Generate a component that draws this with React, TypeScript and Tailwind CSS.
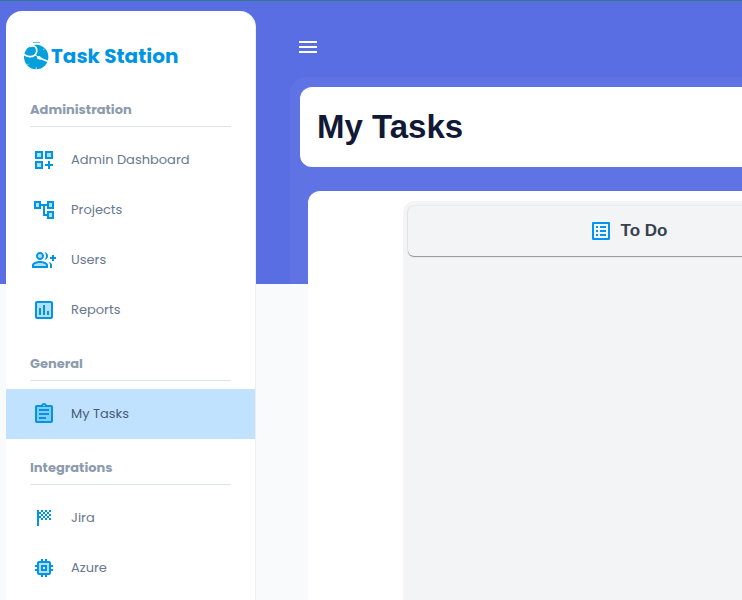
import type { ReactNode } from "react";

type IconProps = { tint?: ReactNode; d: string; className?: string };

function Icon({ tint, d, className = "text-[#0095e2]" }: IconProps) {
  return (
    <svg viewBox="0 0 24 24" className={`h-6 w-6 shrink-0 fill-current ${className}`} aria-hidden="true">
      {tint && <g opacity="0.3">{tint}</g>}
      <path d={d} />
    </svg>
  );
}

const icons = {
  dashboard: (
    <Icon
      tint={<path d="M5 5h4v4H5zM15 5h4v4h-4zM5 15h4v4H5z" />}
      d="M3 11h8V3H3v8zm2-6h4v4H5V5zM13 3v8h8V3h-8zm6 6h-4V5h4v4zM3 21h8v-8H3v8zm2-6h4v4H5v-4zM18 13h-2v3h-3v2h3v3h2v-3h3v-2h-3z"
    />
  ),
  projects: (
    <Icon
      tint={<path d="M4 5h3v4H4zM17 5h3v4h-3zM17 15h3v4h-3z" />}
      d="M22 11V3h-7v3H9V3H2v8h7V8h2v10h4v3h7v-8h-7v3h-2V8h2v3h7zM7 9H4V5h3v4zm10 6h3v4h-3v-4zm0-10h3v4h-3V5z"
    />
  ),
  users: (
    <Icon
      tint={
        <>
          <circle cx="8" cy="8" r="2" />
          <path d="M8 15c-2.7 0-5.8 1.29-6 2.01V18h12v-1c-.2-.71-3.3-2-6-2z" />
        </>
      }
      d="M22 9V7h-2v2h-2v2h2v2h2v-2h2V9zM8 12c2.21 0 4-1.79 4-4s-1.79-4-4-4-4 1.79-4 4 1.79 4 4 4zm0-6c1.1 0 2 .9 2 2s-.9 2-2 2-2-.9-2-2 .9-2 2-2zM8 13c-2.67 0-8 1.34-8 4v3h16v-3c0-2.66-5.33-4-8-4zm6 5H2v-.99C2.2 16.29 5.3 15 8 15s5.8 1.29 6 2v1zM12.51 4.05C13.43 5.11 14 6.49 14 8s-.57 2.89-1.49 3.95C14.47 11.7 16 10.04 16 8s-1.53-3.7-3.49-3.95zM16.53 13.83C17.42 14.66 18 15.7 18 17v3h2v-3c0-1.45-1.59-2.51-3.47-3.17z"
    />
  ),
  reports: (
    <Icon
      tint={<path d="M5 5h14v14H5z" />}
      d="M19 3H5c-1.1 0-2 .9-2 2v14c0 1.1.9 2 2 2h14c1.1 0 2-.9 2-2V5c0-1.1-.9-2-2-2zm0 16H5V5h14v14zM7 10h2v7H7zM11 7h2v10h-2zM15 13h2v4h-2z"
    />
  ),
  tasks: (
    <Icon
      tint={<path d="M5 5h14v14H5z" />}
      d="M7 15h7v2H7zm0-4h10v2H7zm0-4h10v2H7zm12-4h-4.18C14.4 1.84 13.3 1 12 1c-1.3 0-2.4.84-2.82 2H5c-.14 0-.27.01-.4.04-.39.08-.74.28-1.01.55-.18.18-.33.4-.43.64-.1.23-.16.49-.16.77v14c0 .27.06.54.16.78s.25.45.43.64c.27.27.62.47 1.01.55.13.02.26.03.4.03h14c1.1 0 2-.9 2-2V5c0-1.1-.9-2-2-2zm-7-.25c.41 0 .75.34.75.75s-.34.75-.75.75-.75-.34-.75-.75.34-.75.75-.75zM19 19H5V5h14v14z"
    />
  ),
  jira: (
    <Icon d="M11 6H9V4h2V6zM15 4h-2v2h2V4zM9 14h2v-2H9V14zM19 10V8h-2v2H19zM19 14v-2h-2v2H19zM13 14h2v-2h-2V14zM19 4h-2v2h2V4zM13 8V6h-2v2H13zM7 10V8h2V6H7V4H5v16h2v-8h2v-2H7zM15 12h2v-2h-2V12zM11 10v2h2v-2H11zM9 8v2h2V8H9zM13 10h2V8h-2V10zM15 6v2h2V6H15z" />
  ),
  azure: (
    <Icon
      tint={<path d="M7 17h10V7H7v10zm2-8h6v6H9V9z" />}
      d="M15 9H9v6h6V9zm-2 4h-2v-2h2v2zm8-2V9h-2V7c0-1.1-.9-2-2-2h-2V3h-2v2h-2V3H9v2H7c-1.1 0-2 .9-2 2v2H3v2h2v2H3v2h2v2c0 1.1.9 2 2 2h2v2h2v-2h2v2h2v-2h2c1.1 0 2-.9 2-2v-2h2v-2h-2v-2h2zm-4 6H7V7h10v10z"
    />
  ),
};

const sections = [
  {
    title: "Administration",
    items: [
      { label: "Admin Dashboard", icon: icons.dashboard },
      { label: "Projects", icon: icons.projects },
      { label: "Users", icon: icons.users },
      { label: "Reports", icon: icons.reports },
    ],
  },
  { title: "General", items: [{ label: "My Tasks", icon: icons.tasks, active: true }] },
  {
    title: "Integrations",
    items: [
      { label: "Jira", icon: icons.jira },
      { label: "Azure", icon: icons.azure },
    ],
  },
] as { title: string; items: { label: string; icon: ReactNode; active?: boolean }[] }[];

function Logo() {
  return (
    <svg viewBox="0 0 25 28" className="h-7 w-[25px] shrink-0" aria-hidden="true">
      <path d="M9 .5h7" stroke="#5fc3e6" strokeWidth="1" />
      <circle cx="12.2" cy="15" r="12.2" fill="#059fdb" />
      <g fill="none" stroke="#fff" strokeLinecap="round">
        <path d="M0 12.500c3 2.300 7.500 3 10.500.8 2.600-2 3-6 1-8.300-1.300-1.400-3.500-1.200-5.300-.6" strokeWidth="1.700" />
        <path d="M11 12.800l3.500 2.500" strokeWidth="1" />
        <path d="M14.500 15.500l1.500.6" strokeWidth="3" />
        <path d="M16 16.200l8.200 3.400" strokeWidth="1.600" />
        <path d="M12.200 25.800v.6M4 22.500l.4-.4M20.300 7l-.4.400" strokeWidth="1" />
      </g>
    </svg>
  );
}

function Sidebar() {
  return (
    <aside className="mt-[10px] ml-[6px] w-[250px] shrink-0 overflow-hidden rounded-t-2xl border-r border-[#eceef1] bg-white font-['Poppins','Inter',sans-serif]">
      <a href="#home" className="flex h-[70px] items-center gap-[2px] pt-5 pl-[18px] text-xl font-bold text-[#0095e2]">
        <Logo />
        Task Station
      </a>
      <nav>
        {sections.map((section) => (
          <section key={section.title}>
            <h2 className="mx-6 mb-2 border-b border-[#dee5eb] pt-[19px] pb-[6px] text-[13px] leading-5 font-bold text-[#8c9bad]">
              {section.title}
            </h2>
            {section.items.map((item) => (
              <a
                key={item.label}
                href={`#${item.label}`}
                aria-current={item.active ? "page" : undefined}
                className={`flex h-[50px] items-center gap-[15px] px-[26px] text-[13px] leading-5 ${
                  item.active ? "bg-[#c1e2fe] text-[#475b78]" : "text-[#67788e]"
                }`}
              >
                {item.icon}
                {item.label}
              </a>
            ))}
          </section>
        ))}
      </nav>
    </aside>
  );
}

export default function App() {
  return (
    <div className="flex h-screen overflow-hidden border-t border-[#33798e] bg-[linear-gradient(#5a6ee4_283px,#f8fafc_283px)] font-['Liberation_Sans',Arial,sans-serif]">
      <Sidebar />
      <main className="ml-[34px] flex min-w-0 flex-1 flex-col">
        <header className="flex h-[76px] shrink-0 items-center pt-4 pl-[6px]">
          <button type="button" aria-label="Toggle menu">
            <Icon className="text-white" d="M3 18h18v-2H3v2zm0-5h18v-2H3v2zm0-7v2h18V6H3z" />
          </button>
        </header>
        <div className="flex flex-1 flex-col overflow-hidden rounded-tl-2xl bg-white/4 pt-[10px] pl-[10px]">
          <div className="flex h-20 shrink-0 items-center rounded-l-xl bg-white pl-[17px]">
            <h1 className="text-[33px] leading-10 font-bold text-[#111936]">My Tasks</h1>
          </div>
          <div className="mt-6 ml-2 flex flex-1 overflow-hidden rounded-tl-xl bg-white pt-[10px] pl-[95px]">
            <section className="w-[450px] shrink-0 rounded-t-xl bg-[#f3f4f6] p-[5px]">
              <div className="flex h-[50px] items-center justify-center gap-2 rounded-md bg-[#f3f4f6] shadow-[0_1px_1px_rgba(0,0,0,0.38),0_0_2px_rgba(0,0,0,0.12)]">
                <Icon
                  className="text-[#0095f3]"
                  d="M11 7h6v2h-6zm0 4h6v2h-6zm0 4h6v2h-6zM7 7h2v2H7zm0 4h2v2H7zm0 4h2v2H7zM20.100 3H3.900c-.5 0-.9.4-.9.9v16.200c0 .4.4.9.9.9h16.200c.4 0 .9-.5.9-.9V3.900c0-.5-.5-.9-.9-.9zM19 19H5V5h14v14z"
                />
                <h2 className="text-[17px] leading-6 font-bold text-[#374151]">To Do</h2>
              </div>
            </section>
          </div>
        </div>
      </main>
    </div>
  );
}
